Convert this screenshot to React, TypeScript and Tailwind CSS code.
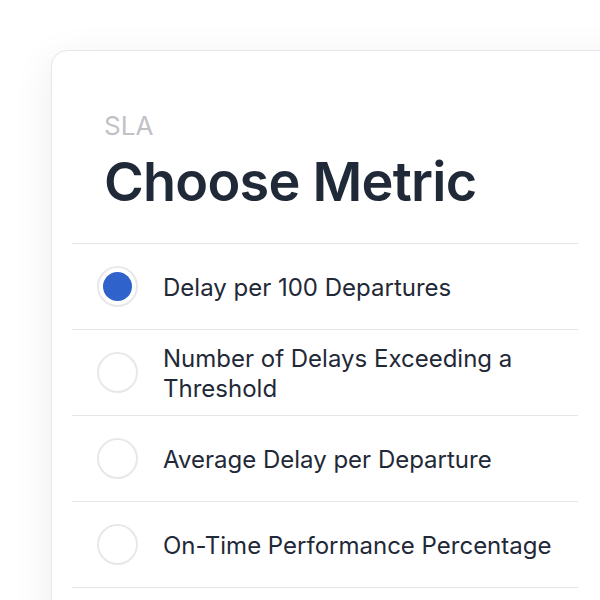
const metrics = [
  'Delay per 100 Departures',
  'Number of Delays Exceeding a Threshold',
  'Average Delay per Departure',
  'On-Time Performance Percentage',
];

export default function App() {
  const selected = 0;
  return (
    <div className="w-[600px] h-[600px] overflow-hidden bg-white pt-[50px] pl-[51px]" style={{ fontFamily: 'Inter, "Noto Sans", sans-serif' }}>
      <div className="w-[600px] h-[600px] rounded-2xl border border-[#e6e6ea] bg-white pl-5 shadow-[0_10px_40px_rgba(0,0,0,0.08)]">
        <div className="w-[506px]">
          <div className="pl-8 pt-[59px] pb-[29px]">
            <p className="text-[26px] leading-8 text-[#c2c2c6]">SLA</p>
            <h1 className="mt-2 text-[54px] leading-[64px] font-semibold tracking-[-0.75px] text-[#1f2937]">Choose Metric</h1>
          </div>
          <div className="border-t border-[#e6e6ea]">
            {metrics.map((m, i) => (
              <div key={m} className="flex h-[86px] items-center gap-[25px] border-b border-[#e6e6ea] pl-[25px] pr-4">
                <div className="flex h-[41px] w-[41px] shrink-0 items-center justify-center rounded-full border-2 border-[#e8e8ec]">
                  {i === selected && <div className="h-[29px] w-[29px] rounded-full bg-[#3062cc]" />}
                </div>
                <span className="pt-[2px] text-[24px] leading-[30px] text-[#1f2937]">{m}</span>
              </div>
            ))}
          </div>
        </div>
      </div>
    </div>
  );
}
